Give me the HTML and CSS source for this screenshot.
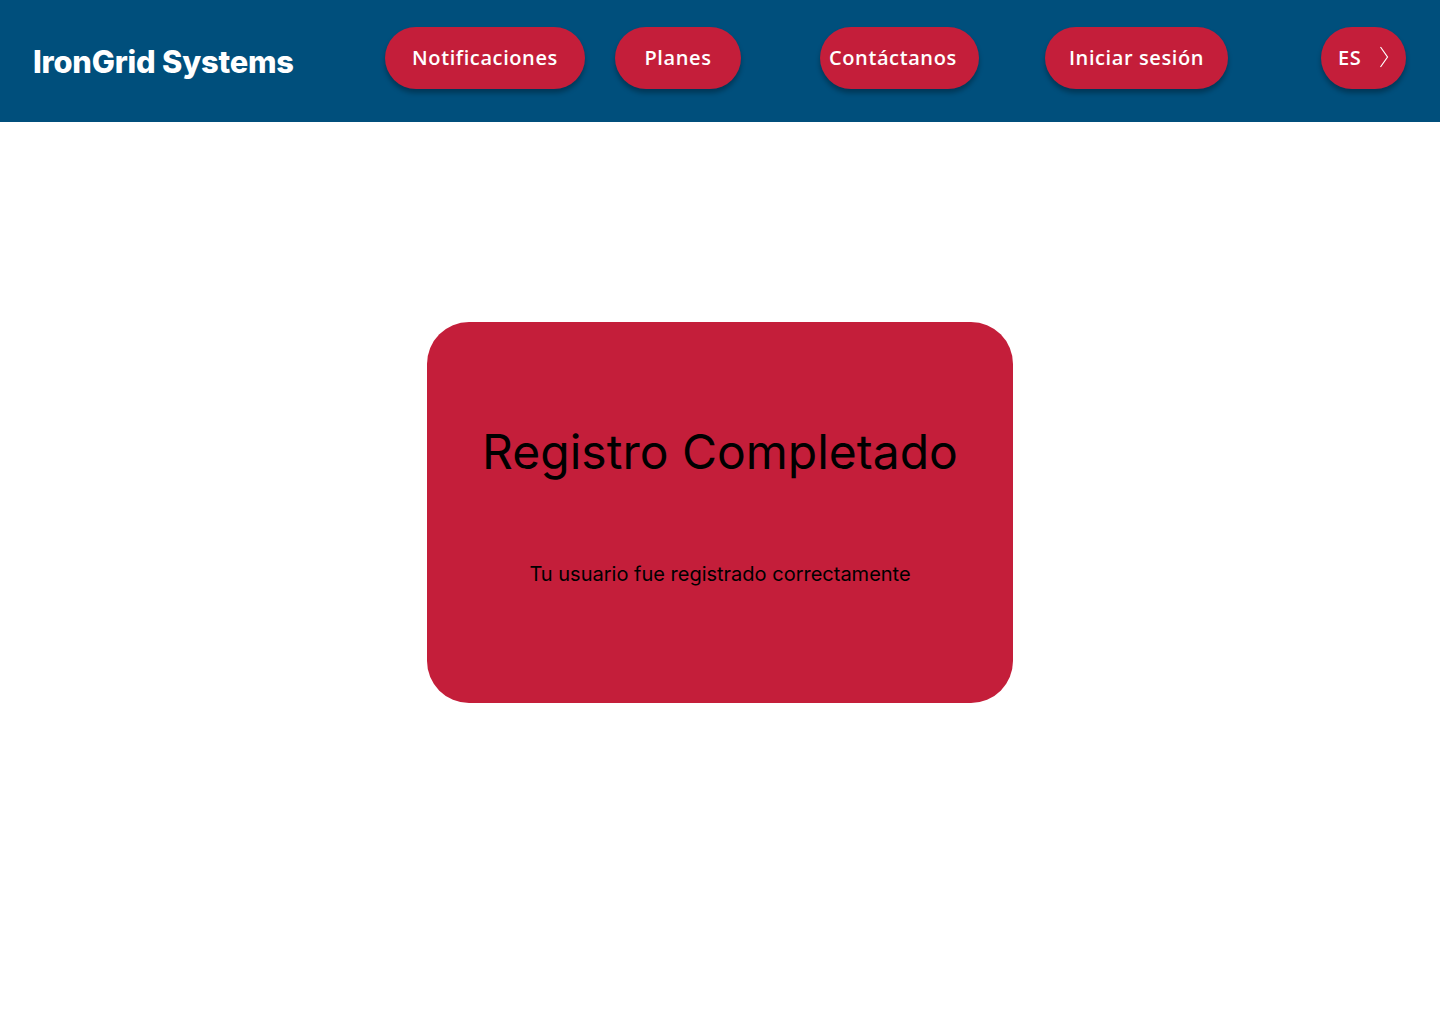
FILE: index.html
```html
<!DOCTYPE html>
<html lang="es">
<head>
<meta charset="utf-8">
<title>IronGrid Systems</title>
<link rel="stylesheet" href="styles.css">
</head>
<body>
<header class="topbar">
  <div class="brand">IronGrid Systems</div>
  <nav class="nav">
    <a class="pill pill-notif" href="#">Notificaciones</a>
    <a class="pill pill-planes" href="#">Planes</a>
    <a class="pill pill-contact" href="#">Contáctanos</a>
    <a class="pill pill-login" href="#">Iniciar sesión</a>
    <a class="pill pill-lang" href="#">ES
      <svg class="chev" width="10" height="22" viewBox="0 0 10 22"><path d="M1.5 1 L8.5 11 L1.5 21" fill="none" stroke="#fff" stroke-width="1.2"/></svg>
    </a>
  </nav>
</header>
<main class="main">
  <section class="card">
    <h1 class="card-title">Registro Completado</h1>
    <p class="card-text">Tu usuario fue registrado correctamente</p>
  </section>
</main>
</body>
</html>
```
FILE: styles.css
```css
* { box-sizing: border-box; }
html, body { margin: 0; padding: 0; background: #fff; }
body { font-family: Inter, "Noto Sans", sans-serif; }

.topbar {
  height: 122px;
  background: #004f7c;
  display: flex;
  align-items: center;
  padding-left: 33px;
}
.brand {
  color: #fff;
  font-weight: 800;
  font-size: 30.8px;
  letter-spacing: -0.2px;
  width: 352px;
}
.nav {
  display: flex;
  align-items: center;
  margin-top: -6px;
}
.pill {
  height: 62px;
  border-radius: 31px;
  background: #c41e3a;
  color: #fff;
  text-decoration: none;
  font-family: "Open Sans", Inter, sans-serif;
  font-weight: 600;
  font-size: 20px;
  letter-spacing: 0.6px;
  display: flex;
  align-items: center;
  justify-content: center;
  padding-bottom: 2px;
  box-shadow: 0 4px 5px rgba(0,0,0,0.3);
  white-space: nowrap;
}
.pill-notif { width: 200px; }
.pill-planes { width: 126px; margin-left: 30px; }
.pill-contact { width: 159px; margin-left: 79px; justify-content: flex-start; padding-left: 9px; }
.pill-login { width: 183px; margin-left: 66px; }
.pill-lang { width: 85px; margin-left: 93px; justify-content: flex-start; padding-left: 17px; }
.chev { margin-left: 18px; }

.main {
  display: flex;
  justify-content: center;
  padding-top: 200px;
}
.card {
  width: 586px;
  height: 381px;
  background: #c41e3a;
  border-radius: 42px;
  display: flex;
  flex-direction: column;
  align-items: center;
  color: #000;
}
.card-title {
  margin: 100px 0 0;
  font-weight: 400;
  font-size: 48px;
  line-height: 60px;
}
.card-text {
  margin: 80px 0 0;
  font-size: 20px;
  line-height: 24px;
}
```
